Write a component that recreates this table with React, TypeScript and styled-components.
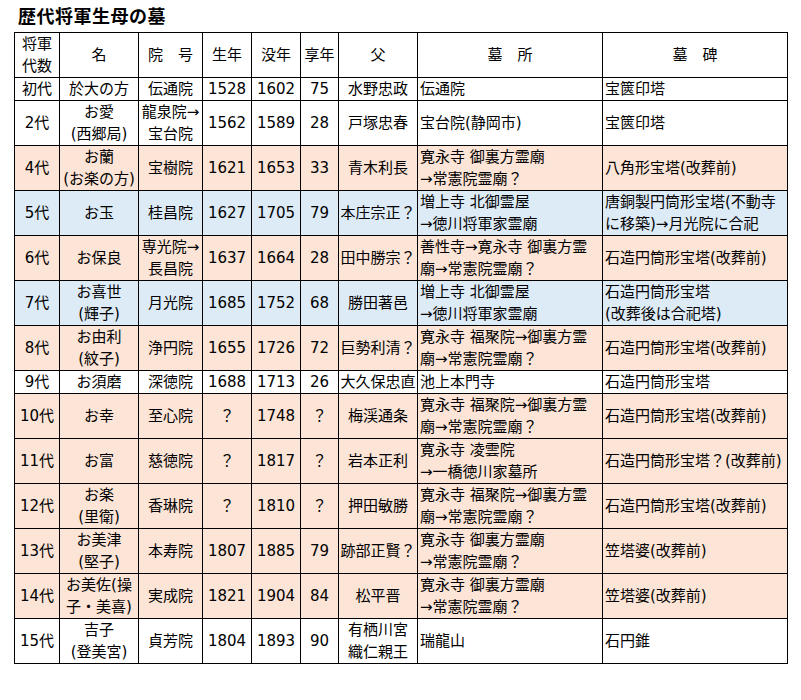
import { createGlobalStyle, styled } from "styled-components";

type Tone = "white" | "peach" | "blue";

interface Grave {
  gen: string;
  name: string;
  temple: string;
  born: string;
  died: string;
  age: string;
  father: string;
  place: string;
  stone: string;
  tone: Tone;
}

const graves: Grave[] = [
  { gen: "初代", name: "於大の方", temple: "伝通院", born: "1528", died: "1602", age: "75", father: "水野忠政", place: "伝通院", stone: "宝篋印塔", tone: "white" },
  { gen: "2代", name: "お愛\n(西郷局)", temple: "龍泉院→\n宝台院", born: "1562", died: "1589", age: "28", father: "戸塚忠春", place: "宝台院(静岡市)", stone: "宝篋印塔", tone: "white" },
  { gen: "4代", name: "お蘭\n(お楽の方)", temple: "宝樹院", born: "1621", died: "1653", age: "33", father: "青木利長", place: "寛永寺 御裏方霊廟\n→常憲院霊廟？", stone: "八角形宝塔(改葬前)", tone: "peach" },
  { gen: "5代", name: "お玉", temple: "桂昌院", born: "1627", died: "1705", age: "79", father: "本庄宗正？", place: "増上寺 北御霊屋\n→徳川将軍家霊廟", stone: "唐銅製円筒形宝塔(不動寺\nに移築)→月光院に合祀", tone: "blue" },
  { gen: "6代", name: "お保良", temple: "専光院→\n長昌院", born: "1637", died: "1664", age: "28", father: "田中勝宗？", place: "善性寺→寛永寺 御裏方霊\n廟→常憲院霊廟？", stone: "石造円筒形宝塔(改葬前)", tone: "peach" },
  { gen: "7代", name: "お喜世\n(輝子)", temple: "月光院", born: "1685", died: "1752", age: "68", father: "勝田著邑", place: "増上寺 北御霊屋\n→徳川将軍家霊廟", stone: "石造円筒形宝塔\n(改葬後は合祀塔)", tone: "blue" },
  { gen: "8代", name: "お由利\n(紋子)", temple: "浄円院", born: "1655", died: "1726", age: "72", father: "巨勢利清？", place: "寛永寺 福聚院→御裏方霊\n廟→常憲院霊廟？", stone: "石造円筒形宝塔(改葬前)", tone: "peach" },
  { gen: "9代", name: "お須磨", temple: "深徳院", born: "1688", died: "1713", age: "26", father: "大久保忠直", place: "池上本門寺", stone: "石造円筒形宝塔", tone: "white" },
  { gen: "10代", name: "お幸", temple: "至心院", born: "？", died: "1748", age: "？", father: "梅渓通条", place: "寛永寺 福聚院→御裏方霊\n廟→常憲院霊廟？", stone: "石造円筒形宝塔(改葬前)", tone: "peach" },
  { gen: "11代", name: "お富", temple: "慈徳院", born: "？", died: "1817", age: "？", father: "岩本正利", place: "寛永寺 凌雲院\n→一橋徳川家墓所", stone: "石造円筒形宝塔？(改葬前)", tone: "peach" },
  { gen: "12代", name: "お楽\n(里衛)", temple: "香琳院", born: "？", died: "1810", age: "？", father: "押田敏勝", place: "寛永寺 福聚院→御裏方霊\n廟→常憲院霊廟？", stone: "石造円筒形宝塔(改葬前)", tone: "peach" },
  { gen: "13代", name: "お美津\n(堅子)", temple: "本寿院", born: "1807", died: "1885", age: "79", father: "跡部正賢？", place: "寛永寺 御裏方霊廟\n→常憲院霊廟？", stone: "笠塔婆(改葬前)", tone: "peach" },
  { gen: "14代", name: "お美佐(操\n子・美喜)", temple: "実成院", born: "1821", died: "1904", age: "84", father: "松平晋", place: "寛永寺 御裏方霊廟\n→常憲院霊廟？", stone: "笠塔婆(改葬前)", tone: "peach" },
  { gen: "15代", name: "吉子\n(登美宮)", temple: "貞芳院", born: "1804", died: "1893", age: "90", father: "有栖川宮\n織仁親王", place: "瑞龍山", stone: "石円錐", tone: "white" },
];

const columnWidths = [45, 79, 64, 49, 49, 38, 79, 185, 185];

const toneColor: Record<Tone, string> = {
  white: "#ffffff",
  peach: "#fce4d6",
  blue: "#ddebf7",
};

function App() {
  return (
    <>
      <GlobalStyle />
      <Page>
        <Title>歴代将軍生母の墓</Title>
        <Table>
          <colgroup>
            {columnWidths.map((w, i) => (
              <col key={i} style={{ width: w }} />
            ))}
          </colgroup>
          <thead>
            <tr>
              <HeadCell>{"将軍\n代数"}</HeadCell>
              <HeadCell>名</HeadCell>
              <HeadCell>院　号</HeadCell>
              <HeadCell>生年</HeadCell>
              <HeadCell>没年</HeadCell>
              <HeadCell>享年</HeadCell>
              <HeadCell>父</HeadCell>
              <HeadCell>墓　所</HeadCell>
              <HeadCell>墓　碑</HeadCell>
            </tr>
          </thead>
          <tbody>
            {graves.map((g) => (
              <Row key={g.gen} $tone={g.tone}>
                <Cell>{g.gen}</Cell>
                <Cell>{g.name}</Cell>
                <Cell>{g.temple}</Cell>
                <Cell>{g.born}</Cell>
                <Cell>{g.died}</Cell>
                <Cell>{g.age}</Cell>
                <Cell>{g.father}</Cell>
                <Cell $align="left">{g.place}</Cell>
                <Cell $align="left">{g.stone}</Cell>
              </Row>
            ))}
          </tbody>
        </Table>
      </Page>
    </>
  );
}

const GlobalStyle = createGlobalStyle`
  body {
    margin: 0;
    background: #ffffff;
    color: #000000;
    font-family: "DejaVu Sans", "Noto Sans CJK JP", sans-serif;
  }
`;

const Page = styled.div`
  padding: 0 0 0 14px;
`;

const Title = styled.h1`
  margin: 0 0 0 4px;
  height: 32px;
  font-family: "Noto Sans CJK JP", sans-serif;
  font-size: 18px;
  font-weight: 700;
  line-height: 30px;
  letter-spacing: 0.5px;
`;

const Table = styled.table`
  border-collapse: collapse;
  table-layout: fixed;
  width: 774px;
  font-size: 15px;
  line-height: 22px;

  td,
  th {
    border: 1px solid #000000;
    padding: 0 1px;
    vertical-align: middle;
    white-space: pre;
    overflow: hidden;
  }
`;

const HeadCell = styled.th`
  font-weight: 400;
  text-align: center;
`;

interface RowProps {
  $tone: Tone;
}

const Row = styled.tr<RowProps>`
  background: ${({ $tone }) => toneColor[$tone]};
`;

interface CellProps {
  $align?: "left" | "center";
}

const Cell = styled.td<CellProps>`
  text-align: ${({ $align }) => $align ?? "center"};
  padding-left: ${({ $align }) => ($align === "left" ? "2px" : "1px")} !important;
`;

export default App;
